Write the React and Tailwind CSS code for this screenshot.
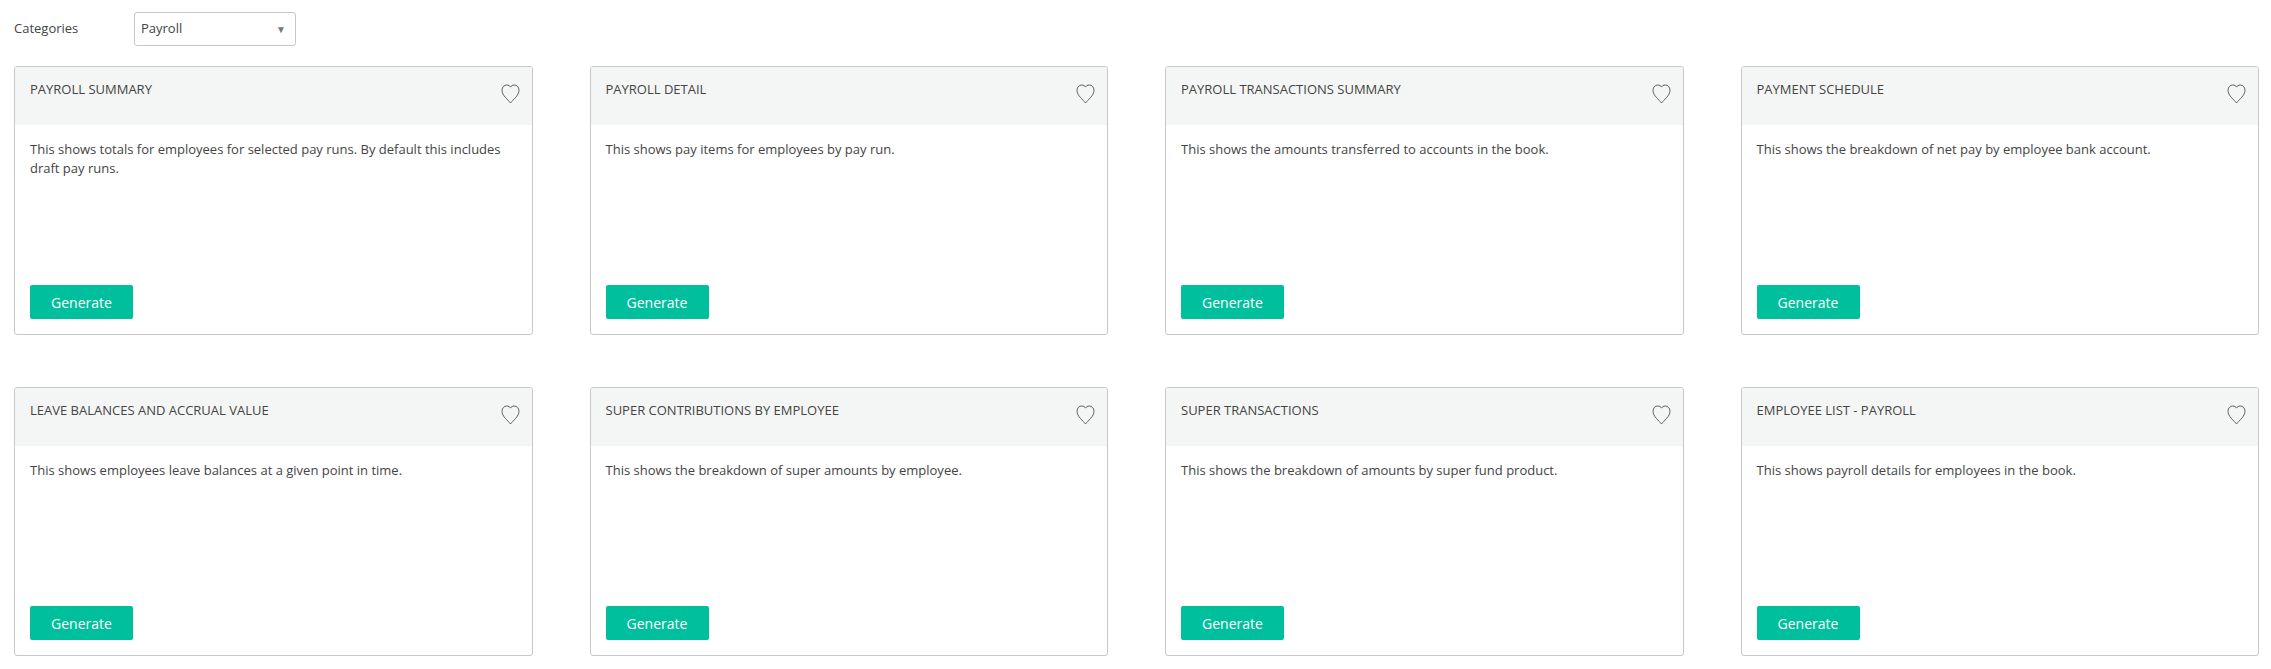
const reports = [
  { title: "PAYROLL SUMMARY", text: "This shows totals for employees for selected pay runs. By default this includes draft pay runs." },
  { title: "PAYROLL DETAIL", text: "This shows pay items for employees by pay run." },
  { title: "PAYROLL TRANSACTIONS SUMMARY", text: "This shows the amounts transferred to accounts in the book." },
  { title: "PAYMENT SCHEDULE", text: "This shows the breakdown of net pay by employee bank account." },
  { title: "LEAVE BALANCES AND ACCRUAL VALUE", text: "This shows employees leave balances at a given point in time." },
  { title: "SUPER CONTRIBUTIONS BY EMPLOYEE", text: "This shows the breakdown of super amounts by employee." },
  { title: "SUPER TRANSACTIONS", text: "This shows the breakdown of amounts by super fund product." },
  { title: "EMPLOYEE LIST - PAYROLL", text: "This shows payroll details for employees in the book." },
];

const HeartIcon = () => (
  <svg width="19" height="20" viewBox="0 0 19 20" fill="none" stroke="#5f5f5f" strokeWidth="1" className="mt-[5px] shrink-0">
    <path d="M9.5 19 C7 15.6 1 11.4 1 6.4 C1 3 3.2 1 5.8 1 C7.5 1 8.8 1.9 9.5 3.1 C10.2 1.9 11.5 1 13.2 1 C15.8 1 18 3 18 6.4 C18 11.4 12 15.6 9.5 19 Z" />
  </svg>
);

const ReportCard = ({ title, text }) => {
  return (
    <div className="flex h-[269px] flex-col overflow-hidden rounded-[3px] border border-[#c8c8c8] bg-white">
      {/* Header */}
      <div className="flex h-[58px] shrink-0 justify-between bg-[#f4f6f5] pl-[15px] pr-[12px] pt-[12px]">
        <h3 className="text-[13px] leading-[20px] font-normal text-[#444]">{title}</h3>
        <HeartIcon />
      </div>

      {/* Body */}
      <div className="flex flex-1 flex-col justify-between px-[15px] pt-[15px] pb-[15px]">
        <p className="text-[13px] leading-[19px] text-[#444]">{text}</p>
        <button className="h-[34px] w-[103px] rounded-[2px] bg-[#00bf9c] text-[14px] text-white">
          Generate
        </button>
      </div>
    </div>
  );
};

export default function App() {
  return (
    <div className="min-h-[669px] bg-white pl-[14px] pr-[12px] pt-[12px] font-['Open_Sans',sans-serif]">
      <div className="flex items-center">
        <span className="w-[120px] text-[13px] text-[#444]">Categories</span>
        <div className="flex h-[34px] w-[162px] items-center justify-between rounded-[3px] border border-[#c8c8c8] pl-[6px] pr-[9px]">
          <span className="text-[13px] text-[#444]">Payroll</span>
          <span className="text-[10px] text-[#777]">▼</span>
        </div>
      </div>

      <div className="mt-[20px] grid grid-cols-4 gap-x-[57px] gap-y-[52px]">
        {reports.map((report) => (
          <ReportCard key={report.title} title={report.title} text={report.text} />
        ))}
      </div>
    </div>
  );
}
